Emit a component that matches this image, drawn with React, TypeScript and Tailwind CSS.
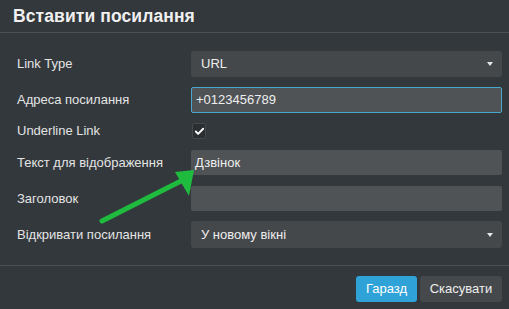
import { Check } from "lucide-react";

const font = { fontFamily: '"Liberation Sans", Arial, sans-serif' };

function Caret() {
  return <span className="ml-auto mr-[9px] w-0 h-0 border-l-[3px] border-r-[3px] border-t-[4px] border-l-transparent border-r-transparent border-t-[#e6e6e6]" />;
}

function Row({ label, children, h = "h-[26px]" }: { label: string; children: React.ReactNode; h?: string }) {
  return (
    <div className={`flex items-center ${h}`}>
      <div className="w-[174px] text-[13px] text-[#e4e4e4]">{label}</div>
      <div className="w-[311px] h-full flex items-center">{children}</div>
    </div>
  );
}

export default function App() {
  return (
    <div className="relative w-[509px] h-[309px] bg-[#33383c] overflow-hidden" style={font}>
      <div className="h-[33px] px-[13px] flex items-center border-b border-[#4b5054]">
        <h1 className="text-[17.5px] font-bold text-[#f0f0f0] tracking-[0.1px]">Вставити посилання</h1>
      </div>

      <div className="pt-[18px] pl-[17px] flex flex-col gap-[10px]">
        <Row label="Link Type">
          <div className="w-full h-full rounded-[3px] bg-[#44484b] flex items-center pl-[10px] text-[13px] text-[#eeeeee]">
            URL
            <Caret />
          </div>
        </Row>
        <Row label="Адреса посилання">
          <div className="w-full h-full rounded-[2px] bg-[#4f5356] border border-[#4aa8cc] flex items-center pl-[4px] text-[13px] text-[#eeeeee]">
            +0123456789
          </div>
        </Row>
        <Row label="Underline Link" h="h-[16px]">
          <div className="w-[14px] h-[16px] ml-[1px] rounded-[2px] bg-[#2b2f32] border border-[#45494c] flex items-center justify-center">
            <Check size={11} strokeWidth={4} color="#ffffff" />
          </div>
        </Row>
        <Row label="Текст для відображення" h="h-[25px] mt-[1px]">
          <div className="w-full h-full rounded-[2px] bg-[#4f5356] flex items-center pl-[4px] text-[13px] text-[#eeeeee]">
            Дзвінок
          </div>
        </Row>
        <Row label="Заголовок" h="h-[25px] mt-[1px]">
          <div className="w-full h-full rounded-[2px] bg-[#4f5356]" />
        </Row>
        <Row label="Відкривати посилання" h="h-[27px]">
          <div className="w-full h-full rounded-[3px] bg-[#44484b] flex items-center pl-[10px] text-[13px] text-[#eeeeee]">
            У новому вікні
            <Caret />
          </div>
        </Row>
      </div>

      <div className="absolute left-0 right-0 top-[265px] border-t border-[#4b5054] flex justify-end gap-[3px] pt-[10px] pr-[7px]">
        <button className="w-[61px] h-[26px] rounded-[3px] bg-[#2fa3d8] text-[13px] text-white">Гаразд</button>
        <button className="w-[82px] h-[26px] rounded-[3px] bg-[#45494c] text-[13px] text-[#eeeeee]">Скасувати</button>
      </div>

      <svg className="absolute left-0 top-0 pointer-events-none" width="509" height="309">
        <line x1="102" y1="221" x2="181" y2="181" stroke="#1fbb3e" strokeWidth="5" strokeLinecap="round" />
        <polygon points="175,172 194,170 189,196" fill="#1fbb3e" />
      </svg>
    </div>
  );
}
